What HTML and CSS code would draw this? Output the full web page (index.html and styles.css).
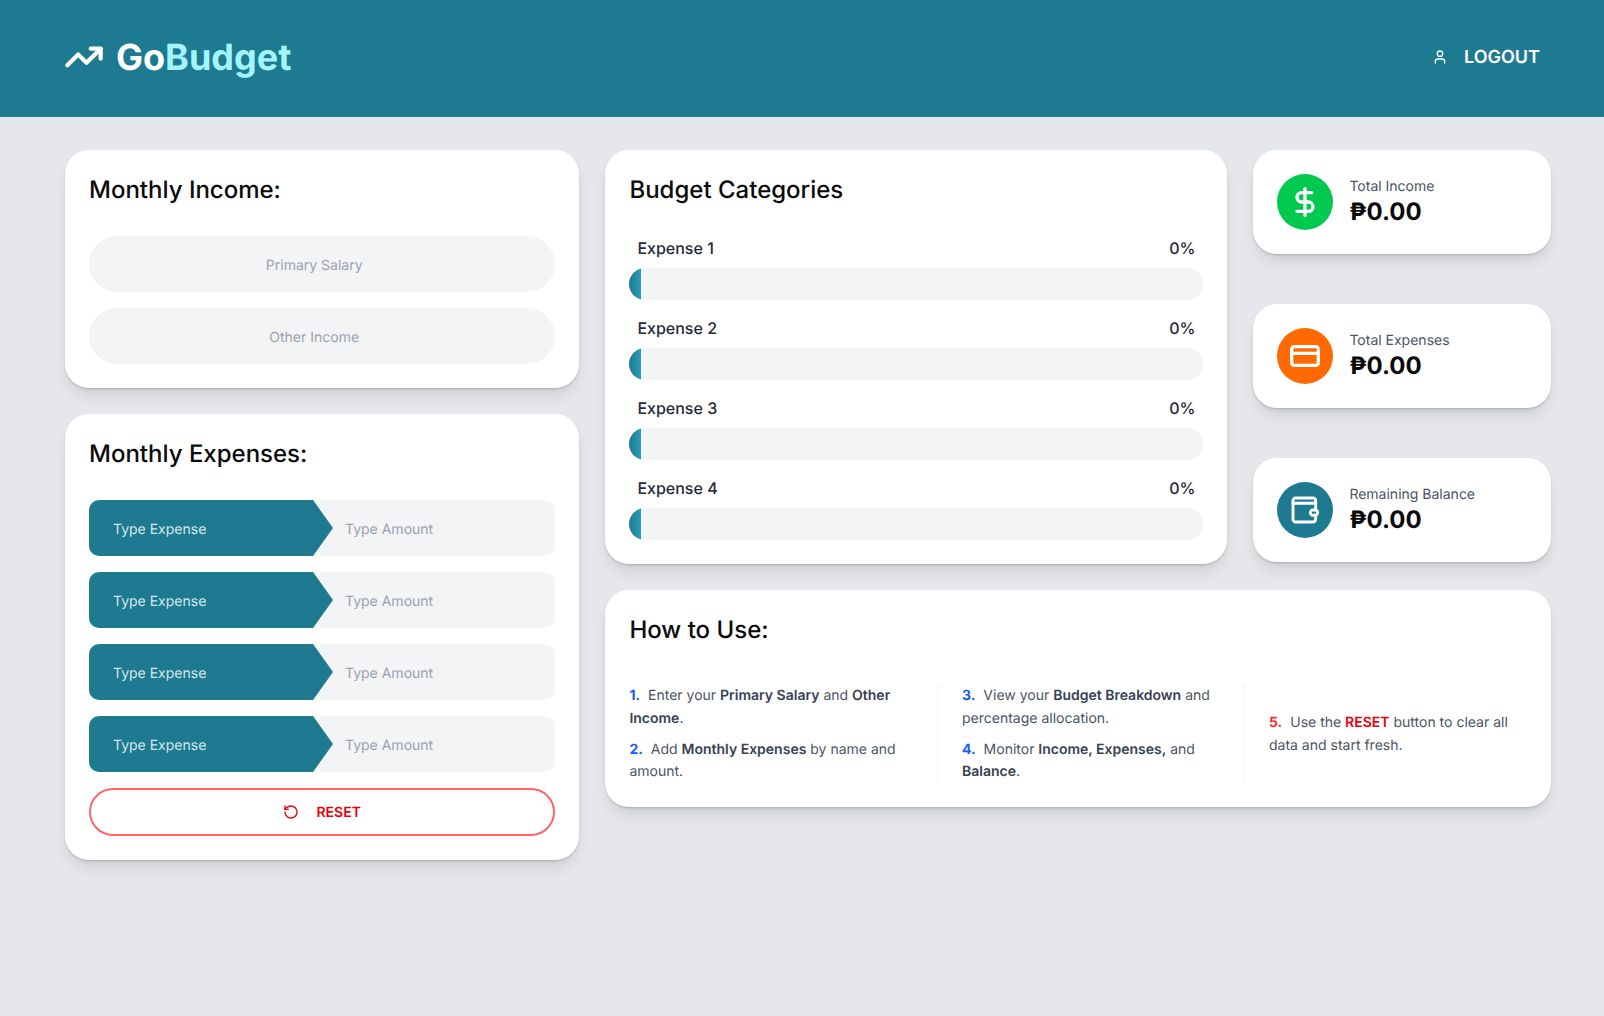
FILE: index.html
```html
<!DOCTYPE html>
<html lang="en">
<head>
<meta charset="utf-8">
<title>GoBudget</title>
<link rel="stylesheet" href="styles.css">
</head>
<body>
<header class="topbar">
  <div class="logo">
    <svg class="logo-icon" viewBox="0 0 24 24" fill="none" stroke="currentColor" stroke-width="2.5" stroke-linecap="round" stroke-linejoin="round"><path d="M22 7 13.5 15.5 8.5 10.5 2 17"/><path d="M16 7h6v6"/></svg>
    <span class="logo-text">Go<span class="logo-accent">Budget</span></span>
  </div>
  <button class="logout" type="button">
    <svg class="logout-icon" viewBox="0 0 24 24" fill="none" stroke="currentColor" stroke-width="2" stroke-linecap="round" stroke-linejoin="round"><path d="M19 21v-2a4 4 0 0 0-4-4H9a4 4 0 0 0-4 4v2"/><circle cx="12" cy="7" r="4"/></svg>
    <span class="button-label">LOGOUT</span>
  </button>
</header>
<main class="layout">
  <div class="left-col">
    <section class="card">
      <h2 class="card-title">Monthly Income:</h2>
      <div class="income-fields">
        <input class="pill-input" placeholder="Primary Salary">
        <input class="pill-input" placeholder="Other Income">
      </div>
    </section>
    <section class="card">
      <h2 class="card-title">Monthly Expenses:</h2>
      <div class="expense-fields">
        <div class="expense-row"><input class="expense-name" placeholder="Type Expense"><input class="expense-amount" placeholder="Type Amount"></div>
        <div class="expense-row"><input class="expense-name" placeholder="Type Expense"><input class="expense-amount" placeholder="Type Amount"></div>
        <div class="expense-row"><input class="expense-name" placeholder="Type Expense"><input class="expense-amount" placeholder="Type Amount"></div>
        <div class="expense-row"><input class="expense-name" placeholder="Type Expense"><input class="expense-amount" placeholder="Type Amount"></div>
        <button class="reset" type="button">
          <svg class="reset-icon" viewBox="0 0 24 24" fill="none" stroke="currentColor" stroke-width="2" stroke-linecap="round" stroke-linejoin="round"><path d="M3 12a9 9 0 1 0 9-9 9.75 9.75 0 0 0-6.74 2.74L3 8"/><path d="M3 3v5h5"/></svg>
          <span class="button-label">RESET</span>
        </button>
      </div>
    </section>
  </div>
  <div class="right-area">
    <section class="card budget">
      <h2 class="card-title">Budget Categories</h2>
      <div class="bars">
        <div class="bar-item"><div class="bar-head"><span>Expense 1</span><span>0%</span></div><div class="track"><div class="fill"></div></div></div>
        <div class="bar-item"><div class="bar-head"><span>Expense 2</span><span>0%</span></div><div class="track"><div class="fill"></div></div></div>
        <div class="bar-item"><div class="bar-head"><span>Expense 3</span><span>0%</span></div><div class="track"><div class="fill"></div></div></div>
        <div class="bar-item"><div class="bar-head"><span>Expense 4</span><span>0%</span></div><div class="track"><div class="fill"></div></div></div>
      </div>
    </section>
    <div class="stats">
      <section class="card stat">
        <div class="stat-icon green"><svg viewBox="0 0 24 24" fill="none" stroke="currentColor" stroke-width="2.5" stroke-linecap="round" stroke-linejoin="round"><line x1="12" y1="2" x2="12" y2="22"/><path d="M17 5H9.5a3.5 3.5 0 0 0 0 7h5a3.5 3.5 0 0 1 0 7H6"/></svg></div>
        <div class="stat-text"><div class="stat-label">Total Income</div><div class="stat-value">₱0.00</div></div>
      </section>
      <section class="card stat">
        <div class="stat-icon orange"><svg viewBox="0 0 24 24" fill="none" stroke="currentColor" stroke-width="2.5" stroke-linecap="round" stroke-linejoin="round"><rect x="2" y="5" width="20" height="14" rx="2"/><line x1="2" y1="10" x2="22" y2="10"/></svg></div>
        <div class="stat-text"><div class="stat-label">Total Expenses</div><div class="stat-value">₱0.00</div></div>
      </section>
      <section class="card stat">
        <div class="stat-icon teal"><svg viewBox="0 0 24 24" fill="none" stroke="currentColor" stroke-width="2.2" stroke-linecap="round" stroke-linejoin="round"><path d="M20 12V5a2 2 0 0 0-2-2H5a2 2 0 0 0-2 2v14a2 2 0 0 0 2 2h13a2 2 0 0 0 2-2v-3"/><path d="M3 7h17"/><rect x="16" y="12" width="5.5" height="4" rx="2"/></svg></div>
        <div class="stat-text"><div class="stat-label">Remaining Balance</div><div class="stat-value">₱0.00</div></div>
      </section>
    </div>
    <section class="card howto">
      <h2 class="card-title">How to Use:</h2>
      <div class="howto-cols">
        <div class="howto-col first">
          <p><span class="num">1.</span> Enter your <b>Primary Salary</b> and <b>Other Income</b>.</p>
          <p><span class="num">2.</span> Add <b>Monthly Expenses</b> by name and amount.</p>
        </div>
        <div class="howto-col second">
          <p><span class="num">3.</span> View your <b>Budget Breakdown</b> and percentage allocation.</p>
          <p><span class="num">4.</span> Monitor <b>Income, Expenses,</b> and <b>Balance</b>.</p>
        </div>
        <div class="howto-col third">
          <p><span class="num red">5.</span> Use the <b class="red-strong">RESET</b> button to clear all data and start fresh.</p>
        </div>
      </div>
    </section>
  </div>
</main>
</body>
</html>
```
FILE: styles.css
```css
* { box-sizing: border-box; }
html, body { margin: 0; padding: 0; }
body {
  background: #e5e7eb;
  font-family: Inter, "Liberation Sans", sans-serif;
  color: #0a0a0a;
  min-height: 1016px;
  text-rendering: geometricPrecision;
}
input, button { text-rendering: geometricPrecision; }
.topbar {
  height: 117px;
  background: #1e7a90;
  display: flex;
  align-items: center;
  justify-content: space-between;
  padding: 0 64px 4px 64px;
  color: #fff;
}
.logo { display: flex; align-items: center; gap: 12px; }
.logo-icon { width: 40px; height: 40px; display: block; }
.logo-text { font-size: 36px; font-weight: 700; line-height: 40px; }
.logo-accent { color: #a2f4fd; }
.logout {
  display: flex;
  align-items: center;
  gap: 16px;
  background: none;
  border: 0;
  padding: 0;
  color: #fff;
  font: 600 18px/28px Inter, sans-serif;
}
.button-label { padding-top: 2px; }
.logout-icon { width: 16px; height: 16px; display: block; }
.layout {
  display: grid;
  grid-template-columns: 514.4px 1fr;
  gap: 26px;
  width: 1486px;
  margin-left: 65px;
  padding-top: 33px;
  align-items: start;
}
.left-col { display: flex; flex-direction: column; gap: 26px; }
.card {
  background: #fff;
  border-radius: 24px;
  padding: 24px;
  box-shadow: 0 10px 15px -3px rgba(0,0,0,.1), 0 4px 6px -4px rgba(0,0,0,.1), 0 1px 2px rgba(0,0,0,.12);
}
.card-title {
  margin: 0;
  font-size: 24px;
  font-weight: 500;
  line-height: 32px;
  color: #0a0a0a;
}
.income-fields { margin-top: 30px; display: flex; flex-direction: column; gap: 16px; }
.pill-input {
  display: block;
  width: 100%;
  height: 56px;
  border: 0;
  outline: 0;
  border-radius: 28px;
  background: #f3f4f6;
  text-align: center;
  padding: 2px 40px 0 24px;
  font: 400 14px Inter, sans-serif;
}
input::placeholder { color: #99a1af; opacity: 1; }
.expense-fields { margin-top: 30px; display: flex; flex-direction: column; gap: 16px; }
.expense-row {
  display: flex;
  height: 56px;
  background: #f3f4f6;
  border-radius: 10px;
  overflow: hidden;
}
.expense-row input {
  border: 0;
  outline: 0;
  height: 56px;
  background: transparent;
  font: 400 14px Inter, sans-serif;
}
.expense-row .expense-name {
  width: 244px;
  flex: none;
  background: #1e7a90;
  color: #fff;
  padding: 2px 44px 0 24px;
  clip-path: polygon(0 0, 224px 0, 100% 50%, 224px 100%, 0 100%);
}
.expense-row .expense-name::placeholder { color: #d5e7eb; }
.expense-row .expense-amount { flex: 1; min-width: 0; padding: 2px 12px 0; }
.reset {
  height: 48px;
  border: 2px solid #ff6467;
  border-radius: 24px;
  background: #fff;
  color: #e7000b;
  display: flex;
  align-items: center;
  justify-content: center;
  gap: 17px;
  font: 600 14px/20px Inter, sans-serif;
}
.reset-icon { width: 16px; height: 16px; display: block; }
.right-area {
  display: grid;
  grid-template-columns: 622px 298px;
  gap: 26px;
  align-items: start;
}
.budget { height: 414px; }
.bars { margin-top: 30px; display: flex; flex-direction: column; gap: 12px; }
.bar-item { display: flex; flex-direction: column; gap: 8px; height: 68px; }
.bar-head {
  display: flex;
  justify-content: space-between;
  padding: 0 8px;
  font-size: 16px;
  line-height: 24px;
  font-weight: 500;
  color: #1e2939;
}
.track {
  height: 32px;
  border-radius: 16px;
  background: #f3f4f6;
  overflow: hidden;
}
.fill {
  width: 12px;
  height: 100%;
  background: linear-gradient(90deg, #1e7a90, #2a9db5);
}
.stats { display: flex; flex-direction: column; gap: 50px; }
.stat { display: flex; align-items: center; gap: 16px; height: 104px; }
.stat-icon {
  width: 56px;
  height: 56px;
  border-radius: 50%;
  flex: none;
  display: flex;
  align-items: center;
  justify-content: center;
  color: #fff;
}
.stat-icon svg { width: 32px; height: 32px; display: block; }
.green { background: #00c950; }
.orange { background: #ff6900; }
.teal { background: #1e7a90; }
.stat-label { font-size: 14px; line-height: 20px; color: #4a5565; padding-top: 1px; margin-bottom: -1px; }
.stat-value { font-size: 24px; line-height: 32px; font-weight: 700; color: #0a0a0a; }
.howto { grid-column: 1 / 3; height: 217px; }
.howto-cols { display: flex; margin-top: 38px; height: 99px; }
.howto-col { font-size: 14px; line-height: 22.75px; color: #4a5565; padding-top: 1px; }
.howto-col p { margin: 0 0 8px; }
.howto-col p:last-child { margin-bottom: 0; }
.howto-col b { font-weight: 600; color: #364153; }
.first { width: 308.6px; padding-right: 24px; border-right: 1px solid #f3f4f6; }
.second { width: 307px; padding: 1px 24px 0; border-right: 1px solid #f3f4f6; }
.third { flex: 1; padding: 2px 0 0 24px; display: flex; align-items: center; }
.num { color: #155dfc; font-weight: 700; margin-right: 4px; }
.num.red { color: #fb2c36; }
.howto-col .red-strong { color: #e7000b; }
```
